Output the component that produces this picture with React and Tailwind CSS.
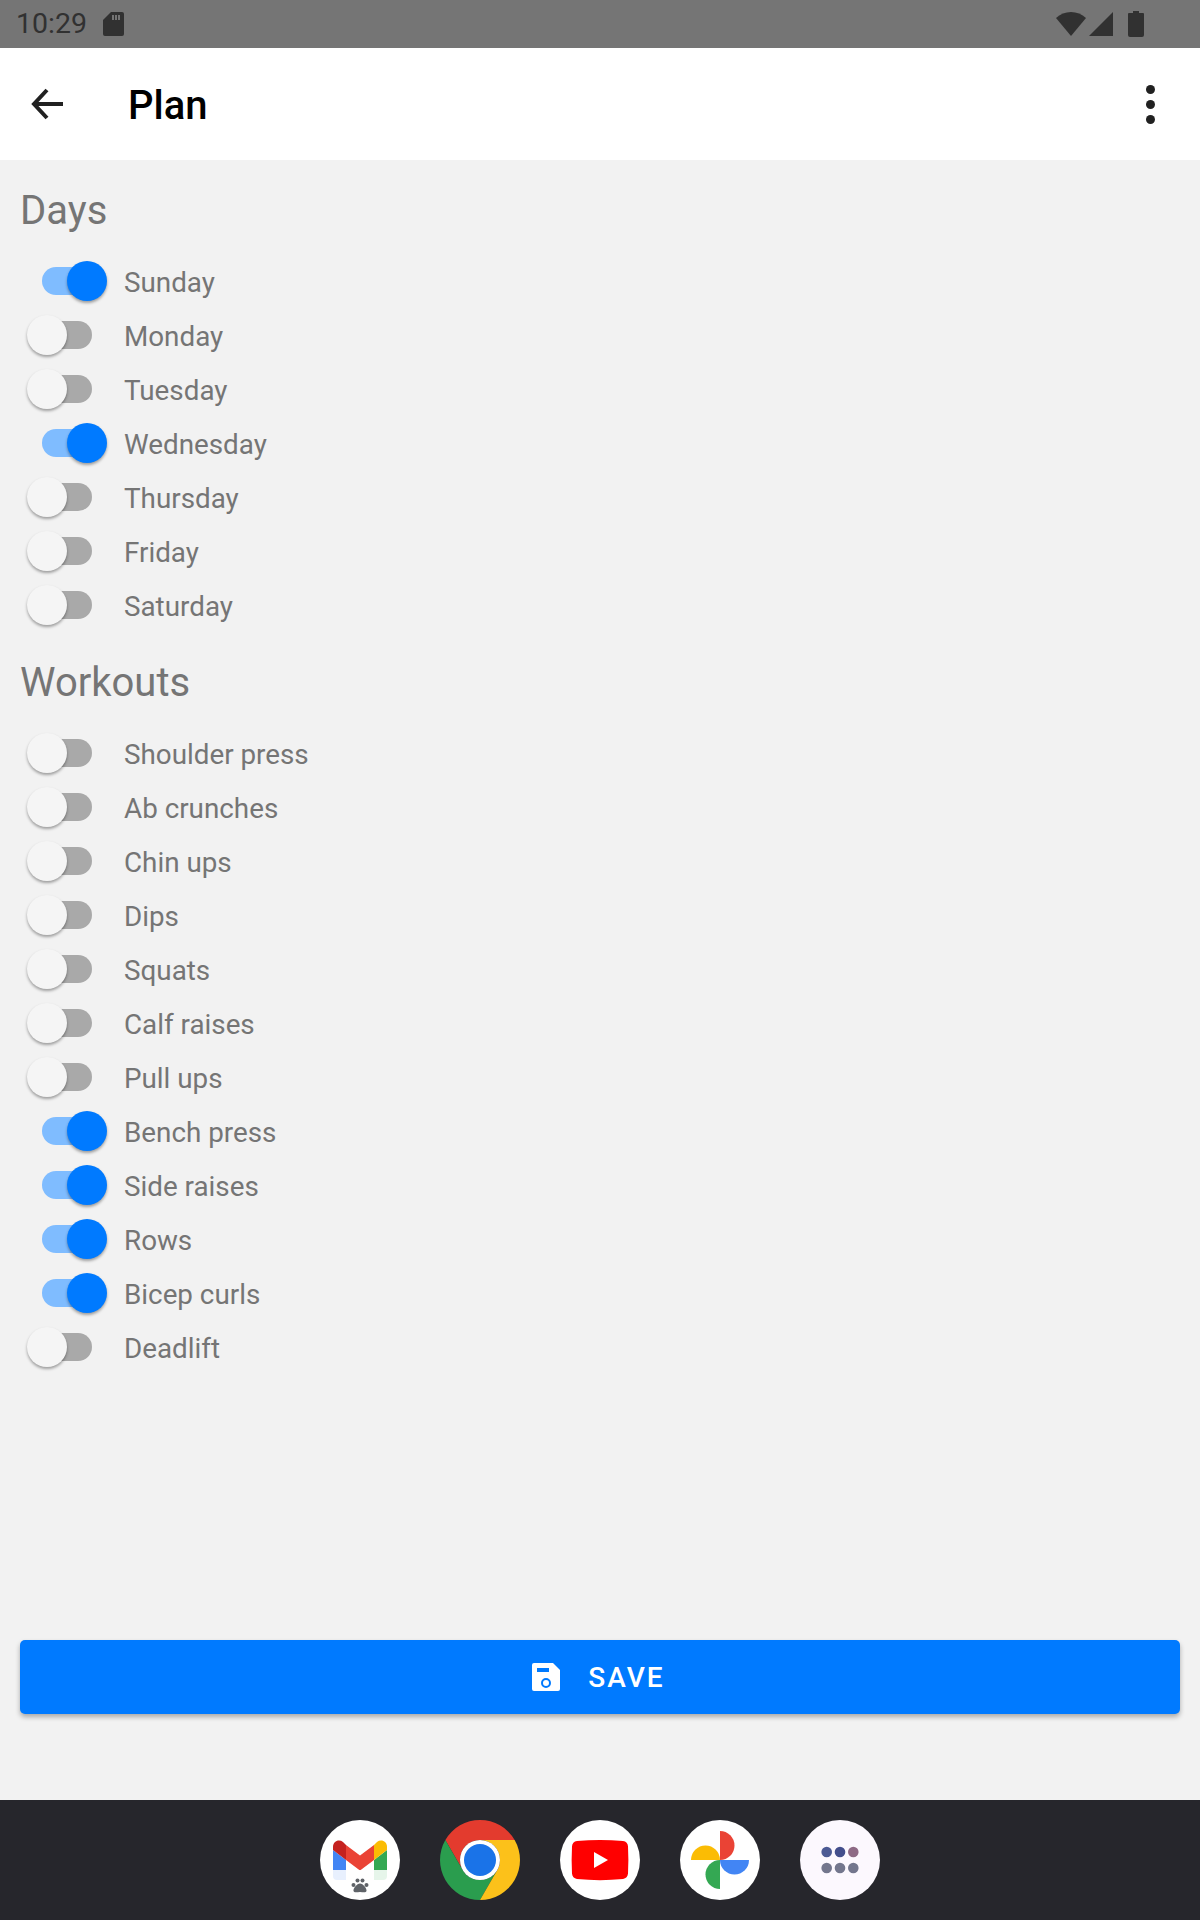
const days = [
  ["Sunday", true],
  ["Monday", false],
  ["Tuesday", false],
  ["Wednesday", true],
  ["Thursday", false],
  ["Friday", false],
  ["Saturday", false],
];

const workouts = [
  ["Shoulder press", false],
  ["Ab crunches", false],
  ["Chin ups", false],
  ["Dips", false],
  ["Squats", false],
  ["Calf raises", false],
  ["Pull ups", false],
  ["Bench press", true],
  ["Side raises", true],
  ["Rows", true],
  ["Bicep curls", true],
  ["Deadlift", false],
];

const Toggle = ({ on }) => (
  <div className="relative w-[80px] h-[40px] ml-[27px] shrink-0">
    <div
      className={`absolute left-[15px] top-[6px] w-[50px] h-[28px] rounded-full ${
        on ? "bg-[#7fbcff]" : "bg-[#a9a9a9]"
      }`}
    />
    <div
      className={`absolute top-0 w-[40px] h-[40px] rounded-full shadow-[0_2px_3px_rgba(0,0,0,0.35)] ${
        on ? "left-[40px] bg-[#007aff]" : "left-0 bg-[#f5f5f5]"
      }`}
    />
  </div>
);

const Row = ({ label, on }) => (
  <div className="flex items-center h-[54px]">
    <Toggle on={on} />
    <span className="ml-[17px] pt-[4px] text-[27.8px] text-[#757575]">{label}</span>
  </div>
);

const Section = ({ title, items }) => (
  <section>
    <h2 className="flex items-center h-[94px] pt-[8px] pl-[20px] text-[40px] font-normal text-[#757575]">
      {title}
    </h2>
    {items.map(([label, on]) => (
      <Row key={label} label={label} on={on} />
    ))}
  </section>
);

const StatusBar = () => (
  <div className="flex items-center h-[48px] bg-[#757575] text-[#313131] shrink-0">
    <span className="ml-[16px] text-[28.5px] leading-none">10:29</span>
    <svg className="ml-[16px]" width="21" height="24" viewBox="0 0 21 24">
      <path
        fill="#313131"
        fillRule="evenodd"
        d="M8 0h11a2 2 0 0 1 2 2v20a2 2 0 0 1-2 2H2a2 2 0 0 1-2-2V8zM9 3v5h2V3zM12 3v5h2V3zM15 3v5h2V3z"
      />
    </svg>
    <svg className="ml-auto mr-[56px]" width="88" height="26" viewBox="0 0 88 26">
      <path fill="#313131" d="M15 25 0 7C8-1 22-1 30 7z" />
      <path fill="#313131" d="M33 25 57 1v24z" />
      <path fill="#313131" d="M72 3a1 1 0 0 1 1-1h4V0h6v2h4a1 1 0 0 1 1 1v21a2 2 0 0 1-2 2H74a2 2 0 0 1-2-2z" />
    </svg>
  </div>
);

const Header = () => (
  <header className="flex items-center h-[112px] bg-white shrink-0">
    <svg className="ml-[30px]" width="33" height="32" viewBox="0 0 33 32">
      <path d="M33 16H4M17 2 4 16l13 14" fill="none" stroke="#212121" strokeWidth="4" />
    </svg>
    <h1 className="ml-[65px] pt-[4px] text-[40px] font-medium text-black">Plan</h1>
    <svg className="ml-auto mr-[45px]" width="9" height="39" viewBox="0 0 9 39">
      <circle cx="4.500" cy="4.500" r="4.500" fill="#212121" />
      <circle cx="4.500" cy="19.500" r="4.500" fill="#212121" />
      <circle cx="4.500" cy="34.500" r="4.500" fill="#212121" />
    </svg>
  </header>
);

const SaveButton = () => (
  <button className="flex items-center justify-center gap-[28px] h-[74px] mx-[20px] mb-[86px] mt-auto pr-[3px] rounded-[5px] bg-[#007aff] text-white shadow-[0_3px_5px_rgba(0,0,0,0.3)] shrink-0">
    <svg width="28" height="28" viewBox="0 0 28 28">
      <path fill="#fff" d="M2 0h19l7 7v19a2 2 0 0 1-2 2H2a2 2 0 0 1-2-2V2a2 2 0 0 1 2-2z" />
      <rect x="5" y="5" width="12" height="4" fill="#007aff" />
      <circle cx="14" cy="20" r="4" fill="#fff" stroke="#007aff" strokeWidth="2" />
    </svg>
    <span className="pt-[2px] text-[28px] font-medium tracking-[2px]">SAVE</span>
  </button>
);

const Gmail = () => (
  <svg width="80" height="80" viewBox="0 0 80 80">
    <circle cx="40" cy="40" r="40" fill="#fff" />
    <path fill="#4285f4" d="M13 30 26 40v20h-9a4 4 0 0 1-4-4z" />
    <path fill="#34a853" d="M54 40 67 30v26a4 4 0 0 1-4 4h-9z" />
    <path fill="#fbbc04" d="M54 25l3-3c4-3 10-1 10 5v3L54 40z" />
    <path fill="#c5221f" d="M13 30v-3c0-6 6-8 10-5l3 3v15z" />
    <path fill="#ea4335" d="M26 40V25l14 10.500L54 25v15L40 50.500z" />
    <path fill="#fff" fillOpacity="0.88" d="M5.400 50h69.200A40 40 0 0 1 5.400 50z" />
    <g fill="#5f6368">
      <circle cx="33.500" cy="65" r="2" />
      <circle cx="37.500" cy="60.500" r="2" />
      <circle cx="42.500" cy="60.500" r="2" />
      <circle cx="46.500" cy="65" r="2" />
      <path d="M40 63.500c3 0 7 5 6.500 7.500-.5 2-3.500 1-6.500 1s-6 1-6.500-1c-.5-2.500 3.500-7.500 6.500-7.500z" />
    </g>
  </svg>
);

const Chrome = () => (
  <svg width="80" height="80" viewBox="0 0 80 80">
    <path fill="#e33b2e" d="M5.360 20A40 40 0 0 1 74.640 20H40A20 20 0 0 0 22.680 50z" />
    <path fill="#2a9d4e" d="M5.360 20A40 40 0 0 0 40 80L57.320 50A20 20 0 0 1 22.680 50z" />
    <path fill="#fcc11a" d="M74.640 20A40 40 0 0 1 40 80L57.320 50A20 20 0 0 0 40 20z" />
    <circle cx="40" cy="40" r="20" fill="#fff" />
    <circle cx="40" cy="40" r="16" fill="#1a73e8" />
  </svg>
);

const Youtube = () => (
  <svg width="80" height="80" viewBox="0 0 80 80">
    <circle cx="40" cy="40" r="40" fill="#fff" />
    <path fill="#f00" d="M17 21c15-1.500 31-1.500 46 0 3 .4 5 2.500 5 5.500 .5 9 .5 18 0 27-.2 3-2 5-5 5.500-15 1.500-31 1.500-46 0-3-.5-4.800-2.500-5-5.500-.5-9-.5-18 0-27 0-3 2-5.100 5-5.500z" />
    <path fill="#fff" d="M34 32 48 40 34 48z" />
  </svg>
);

const Photos = () => (
  <svg width="80" height="80" viewBox="0 0 80 80">
    <circle cx="40" cy="40" r="40" fill="#fff" />
    <path fill="#ea4335" d="M40 11a14.500 14.500 0 0 1 0 29z" />
    <path fill="#fbbc04" d="M11 40a14.500 14.500 0 0 1 29 0z" />
    <path fill="#34a853" d="M40 40a14.500 14.500 0 0 0 0 29z" />
    <path fill="#4285f4" d="M40 40a14.500 14.500 0 0 0 29 0z" />
  </svg>
);

const Apps = () => (
  <svg width="80" height="80" viewBox="0 0 80 80">
    <circle cx="40" cy="40" r="40" fill="#fcf8fe" />
    <circle cx="26.700" cy="32" r="5.300" fill="#4c5a94" />
    <circle cx="40" cy="32" r="5.300" fill="#434e8c" />
    <circle cx="53.300" cy="32" r="5.300" fill="#8e6a85" />
    <circle cx="26.700" cy="48" r="5.300" fill="#73768d" />
    <circle cx="40" cy="48" r="5.300" fill="#73768d" />
    <circle cx="53.300" cy="48" r="5.300" fill="#73768d" />
  </svg>
);

const NavBar = () => (
  <nav className="flex items-center justify-center gap-[40px] h-[120px] bg-[#26262c] shrink-0">
    <Gmail />
    <Chrome />
    <Youtube />
    <Photos />
    <Apps />
  </nav>
);

const App = () => {
  return (
    <div className="flex flex-col h-[1920px] bg-[#f2f2f2] font-['Roboto',sans-serif]">
      <StatusBar />
      <Header />
      <main className="flex flex-col flex-1">
        <Section title="Days" items={days} />
        <Section title="Workouts" items={workouts} />
        <SaveButton />
      </main>
      <NavBar />
    </div>
  );
};

export default App;
